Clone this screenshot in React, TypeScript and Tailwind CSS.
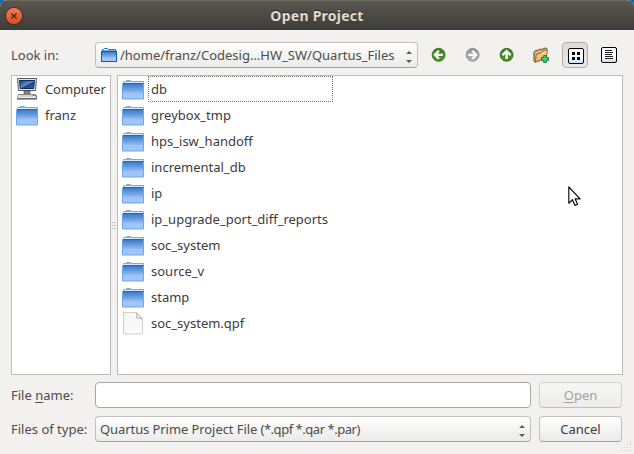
import type { ReactNode } from "react";

const folders = [
  "db",
  "greybox_tmp",
  "hps_isw_handoff",
  "incremental_db",
  "ip",
  "ip_upgrade_port_diff_reports",
  "soc_system",
  "source_v",
  "stamp",
];

function Gradients() {
  return (
    <svg className="absolute size-0" aria-hidden="true">
      <defs>
        <linearGradient id="folderBody" x1="0" y1="0" x2="0" y2="1">
          <stop offset="0" stopColor="#3478c8" />
          <stop offset="0.5" stopColor="#80aeea" />
          <stop offset="0.65" stopColor="#a0c4f8" />
          <stop offset="1" stopColor="#a0c6fa" />
        </linearGradient>
        <linearGradient id="paper" x1="0" y1="0" x2="1" y2="1">
          <stop offset="0" stopColor="#f4f4f4" />
          <stop offset="1" stopColor="#fdfdfd" />
        </linearGradient>
        <linearGradient id="screen" x1="0" y1="0" x2="1" y2="1">
          <stop offset="0" stopColor="#123c7c" />
          <stop offset="0.5" stopColor="#6690c4" />
          <stop offset="0.55" stopColor="#1c4a8c" />
          <stop offset="1" stopColor="#2c64ac" />
        </linearGradient>
        <linearGradient id="green" x1="0" y1="0" x2="0" y2="1">
          <stop offset="0" stopColor="#3d8020" />
          <stop offset="1" stopColor="#4a9a20" />
        </linearGradient>
        <linearGradient id="gray" x1="0" y1="0" x2="0" y2="1">
          <stop offset="0" stopColor="#929292" />
          <stop offset="1" stopColor="#b4b4b4" />
        </linearGradient>
        <linearGradient id="tan" x1="0" y1="0" x2="0" y2="1">
          <stop offset="0" stopColor="#fbe0a0" />
          <stop offset="1" stopColor="#e2a958" />
        </linearGradient>
        <linearGradient id="glow" x1="0" y1="0" x2="0" y2="1">
          <stop offset="0" stopColor="#ffffff" />
          <stop offset="0.6" stopColor="#ffffff" />
          <stop offset="1" stopColor="#b8dcff" />
        </linearGradient>
      </defs>
    </svg>
  );
}

function FolderIcon() {
  return (
    <svg width="24" height="22" viewBox="0 0 24 22" className="shrink-0">
      <path d="M2.5 5V2.5h2l1-1h4l1 1h12V5z" fill="#86b4ee" stroke="#76a8e4" />
      <path d="M2 3.5h20" stroke="#dceafa" />
      <rect x="1.5" y="4.5" width="21" height="15.5" fill="url(#folderBody)" />
      <path d="M1.5 4.5V20h21V4.5" fill="none" stroke="#6ca6ee" />
      <path d="M2 4.5h20" stroke="#2866b4" />
    </svg>
  );
}

function SmallFolderIcon() {
  return (
    <svg width="16" height="16" viewBox="0 0 16 16" className="shrink-0">
      <path d="M1.5 4V2.5h1l1-1h3l1 1h7V4z" fill="#e4f0fc" stroke="#2870c4" />
      <rect x="0.5" y="4.5" width="15" height="10" fill="url(#folderBody)" stroke="#0c5cc0" />
      <path d="M1 4.5h14" stroke="#0b52b0" />
    </svg>
  );
}

function ComputerIcon() {
  return (
    <svg width="24" height="24" viewBox="0 0 24 24" className="shrink-0">
      <path d="M2.5 1.5h19l-1 12h-17z" fill="#e8e8e6" stroke="#555753" />
      <path d="M4.5 3.5h15l-.8 8H5.3z" fill="url(#screen)" stroke="#082c60" />
      <path d="M9 14h6v3H9z" fill="#868884" stroke="#444" strokeWidth=".6" />
      <path d="M3.5 17.5h17l1 4h-19z" fill="#f1f1ef" stroke="#888a86" />
      <path d="M5 19h13" stroke="#999" strokeWidth=".8" />
      <path d="M2 22h20" stroke="#464846" />
      <path d="M17.5 18.5q5-1 4 2" fill="none" stroke="#555" strokeWidth=".8" />
    </svg>
  );
}

function FileIcon() {
  return (
    <svg width="24" height="24" viewBox="0 0 24 24" className="shrink-0">
      <path d="M2.5 1.5h13l6 6v14.5q0 1-1 1h-17q-1 0-1-1z" fill="url(#paper)" stroke="#cfcfcf" />
      <path d="M15 1.5q1.3 1.5.5 5.5q3.5 0 6 1z" fill="#ededed" stroke="#b8b8b8" strokeLinejoin="round" />
    </svg>
  );
}

function ArrowIcon({ turn, fill, stroke }: { turn: number; fill: string; stroke: string }) {
  return (
    <svg width="16" height="16" viewBox="0.4 0.2 16 16">
      <circle cx="8" cy="8" r="6.5" fill={fill} stroke={stroke} strokeWidth="0.8" />
      <path
        d="M12.3 8H5M8.3 4 4.4 8l3.9 4"
        fill="none"
        stroke="#fff"
        strokeWidth="2.3"
        transform={`rotate(${turn} 8 8)`}
      />
    </svg>
  );
}

function NewFolderIcon() {
  return (
    <svg width="16" height="16" viewBox="0 0 16 16">
      <path d="M1 4.8 2.8 3.4l2.2-.1L6.5 2l1.5.6L13 .8l1 1-.8 9.2L2 15.2.9 13.8z" fill="#d8b070" stroke="#685030" strokeLinejoin="round" />
      <path d="M3.4 7.5 8 6l1.2-1.6L14.4 2.6 13.2 11.4 2 15.2z" fill="url(#tan)" stroke="#7a5c30" strokeWidth=".8" />
      <path d="M10.6 8.6h2.8v2h2.1v2.8h-2.1v2.1h-2.8v-2.1H8.5v-2.8h2.1z" fill="#4bcb78" stroke="#14783a" strokeWidth=".9" />
    </svg>
  );
}

function ListIcon() {
  return (
    <svg width="16" height="16" viewBox="0 0 16 16">
      <rect x=".5" y=".5" width="15" height="15" rx="1.5" fill="url(#glow)" stroke="#000" />
      <path d="M4 4h3v3H4zM9 4h3v3H9zM4 9h3v3H4zM9 9h3v3H9z" fill="#000" />
    </svg>
  );
}

function DetailIcon() {
  return (
    <svg width="16" height="16" viewBox="0 0 16 16">
      <rect x=".5" y=".5" width="15" height="15" rx="1.5" fill="url(#glow)" stroke="#000" />
      <path d="M4 3.5h7M4 5.5h8M4 7.5h7M4 9.5h8M4 11.5h8" stroke="#222" />
    </svg>
  );
}

function Spin() {
  return (
    <svg width="6" height="12" viewBox="0 0 6 12" className="mt-[3px] shrink-0">
      <path d="M0 3 3 0l3 3zM0 9h6L3 12z" fill="#5c5c5c" />
    </svg>
  );
}

function ToolButton({ children }: { children: ReactNode }) {
  return <button className="flex size-[26px] items-center justify-center">{children}</button>;
}

const raised =
  "rounded-[4px] border border-[#c3c0bd] border-b-[#a5a29e] bg-linear-to-b from-[#fefefe] to-[#ebebea]";

export default function App() {
  return (
    <div className="bg-[#0868b4]">
      <div className="relative flex h-[454px] w-[634px] flex-col overflow-hidden rounded-t-[7px] bg-[#f2f1f0] font-['Noto_Sans',sans-serif] text-[13px] leading-[18px] text-[#4c4c4c]">
        <Gradients />
        <header className="flex h-[30px] shrink-0 items-center border-t border-[#6c685f] bg-linear-to-b from-[#5a574e] to-[#3d3c37] pl-[6px]">
          <button className="flex size-4 items-center justify-center rounded-full bg-linear-to-b from-[#f47b54] to-[#dd4a1c] shadow-[0_0_0_1px_#35332e]">
            <svg width="8" height="8" viewBox="0 0 8 8">
              <path d="m1.4 1.4 5.2 5.2m0-5.2L1.4 6.6" stroke="#3c2a20" strokeWidth="1.4" />
            </svg>
          </button>
          <h1 className="mr-[22px] flex-1 text-center text-[14px] font-bold tracking-[0.25px] text-[#dfdbd2] [text-shadow:0_-1px_0_#2b2a27]">
            Open Project
          </h1>
        </header>

        <main className="flex flex-1 flex-col pl-[11px] pt-3">
          <div className="flex h-[26px] items-center">
            <label className="w-[84px]">Look in:</label>
            <div className={`flex h-[26px] w-[323px] items-center pl-[5px] pr-[5px] ${raised}`}>
              <SmallFolderIcon />
              <span className="ml-[3px] flex-1 whitespace-nowrap">/home/franz/Codesig...HW_SW/Quartus_Files</span>
              <Spin />
            </div>
            <div className="ml-2 flex gap-2">
              <ToolButton><ArrowIcon turn={0} fill="url(#green)" stroke="#2d6a15" /></ToolButton>
              <ToolButton><ArrowIcon turn={180} fill="url(#gray)" stroke="#8d8d8d" /></ToolButton>
              <ToolButton><ArrowIcon turn={90} fill="url(#green)" stroke="#2d6a15" /></ToolButton>
              <ToolButton><NewFolderIcon /></ToolButton>
              <button className="flex size-[26px] items-center justify-center rounded-[4px] border border-[#b2afac] bg-linear-to-b from-[#dedddc] to-[#e8e7e6] pl-[2px] pt-[2px]">
                <ListIcon />
              </button>
              <ToolButton><DetailIcon /></ToolButton>
            </div>
          </div>

          <div className="mt-[7px] flex h-[300px]">
            <aside className="w-[100px] border border-[#bfbcb9] bg-white pl-[3px]">
              <div className="flex h-[26px] items-center gap-[6px] tracking-[-0.1px] text-[#3c3c3c]">
                <ComputerIcon />
                Computer
              </div>
              <div className="flex h-[26px] items-center gap-[6px] text-[#3c3c3c]">
                <span className="pt-px">
                  <FolderIcon />
                </span>
                franz
              </div>
            </aside>
            <div className="flex w-[6px] flex-col items-center justify-center gap-px">
              <i className="h-px w-1 bg-[#c9c7c4]" />
              <i className="mt-px h-px w-1 bg-[#c9c7c4]" />
              <i className="mt-px h-px w-1 bg-[#c9c7c4]" />
            </div>
            <section className="w-[506px] border border-[#bfbcb9] bg-white pl-[3px]">
              {folders.map((name, index) => (
                <div key={name} className="flex h-[26px] w-[212px] items-center text-[#3c3c3c]">
                  <span className="flex w-[27px] pt-px">
                    <FolderIcon />
                  </span>
                  <span
                    className={
                      index === 0
                        ? "flex h-[26px] flex-1 items-center border border-dotted border-[#777] pl-[2px]"
                        : "flex h-[26px] flex-1 items-center pl-[3px]"
                    }
                  >
                    {name}
                  </span>
                </div>
              ))}
              <div className="flex h-[26px] items-center text-[#3c3c3c]">
                <span className="w-[30px]">
                  <FileIcon />
                </span>
                soc_system.qpf
              </div>
            </section>
          </div>

          <div className="mt-[7px] flex h-[26px] items-center">
            <label className="w-[84px]">
              File <span className="underline underline-offset-2">n</span>ame:
            </label>
            <input className="h-[26px] w-[436px] rounded-[4px] border border-[#aaa7a3] bg-white px-1 outline-none" />
            <button className="ml-2 h-[26px] w-[83px] rounded-[4px] border border-[#d2d0ce] border-b-[#c2c0be] bg-linear-to-b from-[#f6f6f5] to-[#eeeded] text-[#a3a19f]">
              <span className="underline underline-offset-2">O</span>pen
            </button>
          </div>
          <div className="mt-2 flex h-[26px] items-center">
            <label className="w-[84px] whitespace-nowrap">Files of type:</label>
            <div className={`flex h-[26px] w-[436px] items-center justify-between pl-1 pr-[5px] ${raised}`}>
              <span className="whitespace-nowrap tracking-[-0.08px]">
                Quartus Prime Project File <span className="tracking-[-0.47px]">(*.qpf *.qar *.par)</span>
              </span>
              <Spin />
            </div>
            <button className={`ml-2 h-[26px] w-[83px] text-[#3c3c3c] ${raised}`}>Cancel</button>
          </div>
        </main>

        <svg className="absolute bottom-[2px] right-[2px]" width="11" height="11" viewBox="0 0 11 11">
          <path
            d="M9 0h1v1H9zM6 3h1v1H6zM9 3h1v1H9zM3 6h1v1H3zM6 6h1v1H6zM9 6h1v1H9zM0 9h1v1H0zM3 9h1v1H3zM6 9h1v1H6zM9 9h1v1H9z"
            fill="#cfccc9"
          />
        </svg>
        <svg className="absolute left-[568px] top-[186px]" width="14" height="21" viewBox="0 0 14 21">
          <path
            d="M.8 1v16.2l3.7-3.5 2.5 5.7 2.6-1.1-2.4-5.4h4.9z"
            fill="#fff"
            stroke="#111"
            strokeWidth="1.2"
            strokeLinejoin="round"
          />
        </svg>
      </div>
    </div>
  );
}
